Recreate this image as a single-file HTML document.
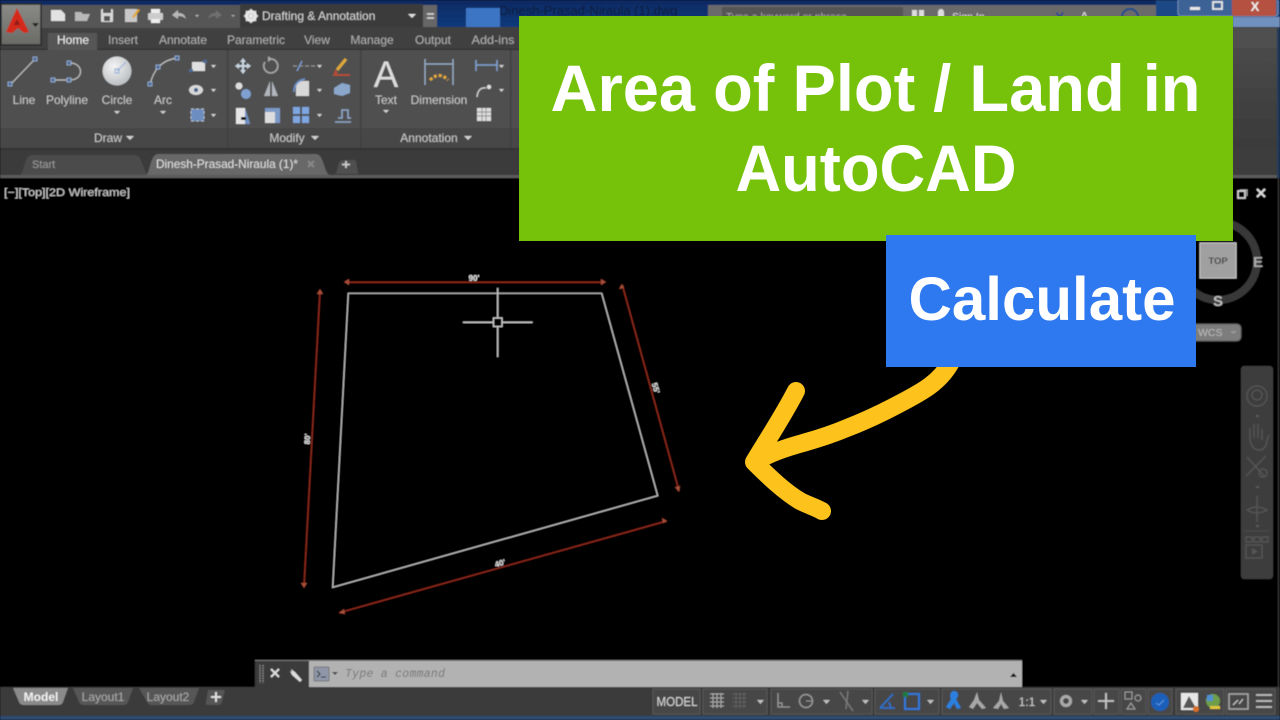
<!DOCTYPE html>
<html><head><meta charset="utf-8"><title>Area of Plot / Land in AutoCAD</title>
<style>
html,body{margin:0;padding:0;background:#000;width:1280px;height:720px;overflow:hidden}
svg{position:absolute;left:0;top:0;display:block}
text{font-family:"Liberation Sans",sans-serif}
</style></head><body>
<svg width="1280" height="720" viewBox="0 0 1280 720">
<defs>
<linearGradient id="tb" x1="0" y1="0" x2="0" y2="1"><stop offset="0" stop-color="#0d2a62"/><stop offset="1" stop-color="#123a7c"/></linearGradient>
<linearGradient id="app" x1="0" y1="0" x2="0" y2="1"><stop offset="0" stop-color="#8a8a86"/><stop offset="1" stop-color="#6a6a66"/></linearGradient>
<linearGradient id="rg" x1="0" y1="0" x2="0" y2="1"><stop offset="0" stop-color="#4a4a4a"/><stop offset="1" stop-color="#3a3a3a"/></linearGradient>
<radialGradient id="circ" cx=".4" cy=".35" r=".75"><stop offset="0" stop-color="#f4f4f4"/><stop offset="1" stop-color="#b4b8bc"/></radialGradient>
<filter id="b" x="-2%" y="-2%" width="104%" height="104%"><feGaussianBlur stdDeviation="0.6"/></filter>
<filter id="b2" x="-2%" y="-2%" width="104%" height="104%"><feGaussianBlur stdDeviation="0.35"/></filter>
</defs>
<rect width="1280" height="720" fill="#000"/>
<g filter="url(#b)">
<!-- title bar -->
<rect width="1280" height="28" fill="url(#tb)"/>
<rect x="466" y="8" width="34" height="20" fill="#3a74c4"/>
<text x="499" y="15" font-size="13" fill="#0c1c3a">Dinesh-Prasad-Niraula (1).dwg</text>
<rect x="708" y="5" width="448" height="23" fill="#6b6b6b"/>
<rect x="722" y="7" width="181" height="21" fill="#555"/>
<text x="726" y="20" font-size="10.5" fill="#aaa">Type a keyword or phrase</text>
<text x="952" y="20" font-size="10.5" fill="#ddd">Sign In</text>
<text x="1055" y="22" font-size="14" font-weight="bold" fill="#1c4a8c">X</text>
<text x="1080" y="21" font-size="13" fill="#ddd">A</text>
<circle cx="1130" cy="17" r="8" fill="none" stroke="#1c4a8c" stroke-width="2"/>
<rect x="912" y="10" width="5" height="10" fill="#ddd"/><rect x="919" y="10" width="5" height="10" fill="#ddd"/><rect x="938" y="9" width="6" height="12" rx="3" fill="#ddd"/>
<rect x="1156" y="0" width="124" height="28" fill="#1c4a86"/>
<rect x="1178" y="-2" width="100" height="18" rx="3" fill="#3c6295" stroke="#8aa6c8" stroke-width=".7"/>
<rect x="1232" y="-2" width="44" height="18" rx="2" fill="#b5513f"/>
<rect x="1190" y="7" width="10" height="3" fill="#e8e8e8"/>
<rect x="1213" y="2" width="9" height="7" fill="none" stroke="#e8e8e8" stroke-width="1.800"/>
<text x="1255" y="11" font-size="13" font-weight="bold" fill="#f0f0f0" text-anchor="middle">X</text>
<rect x="1233" y="17" width="47" height="11" fill="#6f90bd"/>

<!-- ribbon base -->
<rect x="0" y="27" width="1280" height="23" fill="#3f3f3f"/>
<rect x="0" y="49" width="1280" height="1" fill="#2d2d2d"/>
<rect x="0" y="50" width="1280" height="78" fill="#505050"/>
<rect x="0" y="128" width="1280" height="20" fill="#474747"/>
<rect x="0" y="148" width="1280" height="2" fill="#333"/>
<rect x="0" y="150" width="1280" height="25" fill="#3b3b3b"/>
<rect x="0" y="175" width="1280" height="3" fill="#5c5c5c"/>
<rect x="1233" y="28" width="47" height="20" fill="#505050"/>
<rect x="1233" y="48" width="47" height="101" fill="url(#rg)"/>
<rect x="1233" y="149" width="47" height="26" fill="#3c3c3c"/>
<rect x="1277" y="28" width="3" height="150" fill="#243a5c"/>
<rect x="227" y="50" width="1.5" height="98" fill="#3f3f3f"/><rect x="360" y="50" width="1.5" height="98" fill="#3f3f3f"/><rect x="510" y="50" width="1.5" height="98" fill="#3f3f3f"/>

<!-- QAT -->
<path d="M40 5H240V28H40Z" fill="#565656"/>
<path d="M240 4H423V27H240Z" fill="#3a3a3a"/>
<path d="M423 5H437V27H423Z" fill="#666"/>
<path d="M427 14h7M427 18h7" stroke="#ddd" stroke-width="1.5"/>
<path d="M408 14h8l-4 4z" fill="#ddd"/>
<rect x="1" y="4" width="40" height="41" fill="url(#app)" stroke="#2c2c2c" stroke-width="1.5"/>
<path d="M17 8 L29 32 L24 33 L18 28 L12 33 L6 32 Z" fill="#d32a1f"/>
<path d="M17 19l-3 6h6z" fill="#8e1c14"/>
<path d="M32 23h7l-3.500 4z" fill="#222"/>
<!-- qat icons -->
<path d="M51 10h10l4 4v7H51Z" fill="#e2e2e2"/>
<path d="M75 12h6l2 2h7l-3 7H75Z" fill="#b8b8b8"/>
<rect x="101" y="9" width="12" height="13" rx="1" fill="#d8d8d8"/><rect x="103" y="9" width="8" height="4" fill="#555"/><rect x="104" y="16" width="6" height="5" fill="#555"/>
<rect x="125" y="9" width="12" height="13" fill="#c8c8c8"/><path d="M132 17l6-8 2 1-6 8z" fill="#e2a62b"/>
<rect x="148" y="13" width="15" height="7" rx="1" fill="#ccc"/><rect x="151" y="9" width="9" height="4" fill="#eee"/><rect x="151" y="19" width="9" height="4" fill="#eee"/>
<path d="M172 15l6-5v3c5 0 7 2 8 6-2-2-4-3-8-3v3z" fill="#b8b8b8"/>
<path d="M195 15h4l-2 2z" fill="#bbb"/>
<path d="M222 15l-6-5v3c-5 0-7 2-8 6 2-2 4-3 8-3v3z" fill="#6f6f6f"/>
<path d="M231 15h4l-2 2z" fill="#aaa"/>
<circle cx="251" cy="16" r="4.500" fill="none" stroke="#e8e8e8" stroke-width="3"/>
<path d="M251 9v14M244 16h14M246 11l10 10M256 11l-10 10" stroke="#e8e8e8" stroke-width="1.500"/>
<text x="262" y="20" font-size="12" fill="#d2d2d2">Drafting &amp; Annotation</text>

<!-- tabs -->
<path d="M48 50V33h49v17Z" fill="#565656"/>
<text x="73" y="44" font-size="12" text-anchor="middle" fill="#f0f0f0">Home</text>
<g font-size="12" text-anchor="middle" fill="#aeaeae">
<text x="123" y="44">Insert</text><text x="183" y="44">Annotate</text><text x="256" y="44">Parametric</text><text x="317" y="44">View</text><text x="372" y="44">Manage</text><text x="433" y="44">Output</text><text x="493" y="44" textLength="43" lengthAdjust="spacingAndGlyphs">Add-ins</text>
</g>

<!-- Draw icons -->
<g fill="none" stroke="#c0c0c0" stroke-width="1.200">
<path d="M10 85L35 59"/>
<path d="M53 80H70C84 80 84 63 70 63"/>
<path d="M150 85C153 70 162 60 177 58"/>
</g>
<g fill="#4f6a97" stroke="#9db6db" stroke-width=".8">
<rect x="8" y="82" width="4" height="4"/><rect x="33" y="57" width="4" height="4"/>
<rect x="51" y="78" width="4" height="4"/><rect x="67" y="78" width="4" height="4"/><rect x="67" y="61" width="4" height="4"/>
<rect x="148" y="82" width="4" height="4"/><rect x="156" y="65" width="4" height="4"/><rect x="175" y="56" width="4" height="4"/>
</g>
<circle cx="117" cy="71" r="14.500" fill="url(#circ)"/>
<path d="M117 71L126 62" stroke="#8fb0dc" stroke-width="1"/><rect x="115" y="69" width="4" height="4" fill="none" stroke="#7c9fd2" stroke-width=".8"/>
<g font-size="12" text-anchor="middle" fill="#c8c8c8">
<text x="24" y="104">Line</text><text x="67" y="104">Polyline</text><text x="117" y="104">Circle</text><text x="163" y="104">Arc</text>
<text x="386" y="104">Text</text><text x="439" y="104">Dimension</text>
<text x="108" y="142">Draw</text><text x="287" y="142">Modify</text><text x="429" y="142">Annotation</text>
</g>
<g fill="#d0d0d0">
<path d="M114 111h6l-3 3zM160 111h6l-3 3zM383 110h6l-3 3z"/>
<path d="M126 136h8l-4 4zM311 136h8l-4 4zM464 136h8l-4 4z"/>
<path d="M211 65h5l-2.500 3zM211 89h5l-2.500 3zM211 114h5l-2.500 3zM317 65h5l-2.500 3zM317 89h5l-2.500 3zM317 114h5l-2.500 3zM499 65h5l-2.500 3zM499 89h5l-2.500 3z"/>
</g>
<path d="M192 62h13v9h-13z" fill="#e0e0e0"/><rect x="189" y="69" width="4" height="3" fill="#4f6a97"/><rect x="203" y="60" width="4" height="3" fill="#4f6a97"/>
<ellipse cx="196" cy="90" rx="7" ry="5" fill="#d8d8d8"/><circle cx="196" cy="90" r="2" fill="#45618e"/>
<rect x="191" y="109" width="13" height="12" fill="#6c8dbf" stroke="#b8c0cc" stroke-width="1" stroke-dasharray="3 2"/>
<!-- Modify icons -->
<path d="M243 58l3 4h-2v3h3v-2l4 3-4 3v-2h-3v3h2l-3 4-3-4h2v-3h-3v2l-4-3 4-3v2h3v-3h-2z" fill="#c8d4e0"/>
<path d="M265 62A7 7 0 1 0 270 59" fill="none" stroke="#a8a8a8" stroke-width="1.600"/><path d="M268 56l4 3-4 3z" fill="#a8a8a8"/>
<path d="M293 66h23" stroke="#909090" stroke-width="1.200" stroke-dasharray="4 2"/><path d="M297 71l5-10" stroke="#7fa0d8" stroke-width="1.300"/>
<path d="M346 59l-9 11" stroke="#e0a93a" stroke-width="3"/><path d="M335 70l-1 4 4-1z" fill="#cc4a2b"/><path d="M333 75h17" stroke="#cc4a2b" stroke-width="1.500"/>
<circle cx="239" cy="86" r="3.500" fill="#ddd"/><circle cx="246" cy="94" r="5" fill="#7fa0d0"/>
<path d="M270 81l-6 15h6ZM272 81l6 15h-6Z" fill="#b0b6bc"/>
<path d="M296 96V88q0-6 6-7h7v15Z" fill="#d8d8d8"/><path d="M294 92q0-11 11-13" stroke="#6d90c8" stroke-width="1.800" fill="none"/>
<path d="M334 88l8-5 8 2v8l-8 3-8-2Z" fill="#8ba7cc"/>
<path d="M236 108h9l5 16h-14Z" fill="#e6e6e6"/><path d="M245 108l5 16h-5Z" fill="#6e90c4"/><rect x="241" y="117" width="5" height="3" fill="#111"/>
<rect x="265" y="108" width="15" height="15" fill="#7b9ac8"/><rect x="265" y="112" width="10" height="11" fill="#ddd"/>
<g fill="#7ea6e0"><rect x="293" y="107" width="7" height="7"/><rect x="302" y="107" width="7" height="7"/><rect x="293" y="116" width="7" height="7"/><rect x="302" y="116" width="7" height="7"/></g>
<path d="M335 122h16M338 118h4v-8h6v8h3" fill="none" stroke="#8ea6c8" stroke-width="1.600"/>
<!-- Annotation icons -->
<text x="386" y="87" font-size="37" text-anchor="middle" fill="#dcdcdc">A</text>
<path d="M425 59v26M453 59v26M425 64h28" stroke="#9ab0cc" stroke-width="1.300" fill="none"/>
<path d="M430 80q9-9 18 0" stroke="#e0a93a" stroke-width="3" stroke-dasharray="3 2" fill="none"/>
<path d="M476 60v11M497 60v11M476 65h21" stroke="#7fa0d0" stroke-width="1.500" fill="none"/>
<path d="M477 97q1-10 9-9" stroke="#ccc" stroke-width="1.500" fill="none"/><circle cx="489" cy="87" r="2.200" fill="#e0e0e0"/>
<rect x="477" y="108" width="14" height="13" fill="#ddd"/><path d="M477 112h14M477 116h14M482 108v13M486 108v13" stroke="#777" stroke-width=".7"/>

<!-- file tabs -->
<path d="M20 175c4-1 4-20 12-20h103c8 0 8 19 14 20Z" fill="#4c4c4c"/>
<path d="M146 175c4-1 4-21 12-21h158c8 0 8 20 14 21Z" fill="#686868"/>
<path d="M335 174c3-1 2-14 8-14h12c2 0 2 14 4 14Z" fill="#505050"/>
<text x="32" y="168" font-size="11" fill="#9c9c9c">Start</text>
<text x="156" y="168" font-size="12" fill="#e0e0e0" textLength="142" lengthAdjust="spacingAndGlyphs">Dinesh-Prasad-Niraula (1)*</text>
<path d="M308 161l6 6M314 161l-6 6" stroke="#888" stroke-width="2"/>
<path d="M346 161v7M342 164.500h8" stroke="#ccc" stroke-width="1.800"/>

<!-- canvas -->
<rect x="0" y="178" width="1280" height="510" fill="#000"/>
<text x="4" y="196" font-size="11" fill="#d2d2d2" textLength="126" lengthAdjust="spacingAndGlyphs">[−][Top][2D Wireframe]</text>
<rect x="1278" y="178" width="1" height="510" fill="#3a3a3a"/>
<rect x="1238" y="191" width="7" height="7" fill="none" stroke="#ddd" stroke-width="1.600"/><path d="M1240 190h7v6" stroke="#aaa" fill="none"/>
<path d="M1257 189l8 8M1265 189l-8 8" stroke="#ddd" stroke-width="2"/>

<!-- drawing -->
<path d="M348.300 293.300H601.700L657.700 495.700L332.700 587.300Z" fill="none" stroke="#c8c8c8" stroke-width="1.200"/>
<g stroke="#8c2a1e" stroke-width="1.500" fill="none">
<path d="M347 282.300H604"/><path d="M622.300 285L679 490.700"/><path d="M666.700 521L339.300 612.700"/><path d="M320 290.700L304 586.700"/>
</g>
<g fill="#a8503a">
<path d="M344 282l5-3v6ZM606 282l-5-3v6Z"/><path d="M622 284l-3 5 5-1ZM679 492l-4-5 5-1Z"/><path d="M667 521l-5-3 1 5ZM339 613l5-4 1 5Z"/><path d="M320 289l-3 5h6ZM304 588l-3-5h6Z"/>
</g>
<g font-size="8" font-weight="bold" fill="#eee" text-anchor="middle">
<text x="474" y="281">90'</text>
<text x="656" y="391" transform="rotate(74 656 388)">55'</text>
<text x="500" y="566" transform="rotate(-16 500 563)">40'</text>
<text x="307" y="442" transform="rotate(-87 307 439)">80'</text>
</g>
<g stroke="#d0d0d0" stroke-width="1.300" fill="none">
<path d="M463 322.300H493.500M502 322.300H532.500M497.700 288V318M497.700 327V357"/>
<rect x="493.500" y="318" width="8.500" height="8.500"/>
</g>

<!-- viewcube -->
<circle cx="1218" cy="261" r="39" fill="none" stroke="#383838" stroke-width="8"/>
<rect x="1200" y="243" width="36" height="35" fill="#a0a0a0" stroke="#c4c4c4" stroke-width="1"/>
<text x="1218" y="264" font-size="9.500" font-weight="bold" text-anchor="middle" fill="#444">TOP</text>
<text x="1258" y="267" font-size="15" font-weight="bold" text-anchor="middle" fill="#a8a8a8">E</text>
<text x="1218" y="306" font-size="15" font-weight="bold" text-anchor="middle" fill="#bcbcbc">S</text>
<rect x="1190" y="324" width="51" height="17" rx="4" fill="#7d7d7d" stroke="#555"/>
<text x="1198" y="336" font-size="10.500" fill="#bdbdbd">WCS</text>
<path d="M1230 331h7l-3.500 3z" fill="#999"/>
<!-- navbar -->
<rect x="1241" y="366" width="32" height="213" rx="3" fill="#3c3c3c"/>
<g fill="none" stroke="#555" stroke-width="1.400">
<circle cx="1257" cy="396" r="10"/><circle cx="1257" cy="395" r="5"/>
<path d="M1250 440v-12M1254 438v-14M1258 438v-14M1262 440v-11M1250 440q2 10 9 10t8-10l2-5" />
<path d="M1247 457l18 20M1266 456l-20 20"/><circle cx="1263" cy="473" r="4"/>
<path d="M1257 496v26M1247 510q10-6 20 0q-10 6-20 0"/>
<path d="M1246 537h6v5h-6ZM1254 537h6v5h-6ZM1262 537h6v5h-6Z"/><rect x="1246" y="545" width="16" height="13"/>
<path d="M1244 531h26" stroke="#4a4a4a"/>
</g>
<path d="M1252 548l6 3.500-6 3.500Z" fill="#555"/>
<path d="M1256 415h3v2h-3ZM1256 486h3v2h-3ZM1256 525h3v2h-3Z" fill="#5a5a5a"/>

<!-- command line -->
<rect x="255" y="661" width="54" height="26" fill="#3a3a3a"/>
<rect x="309" y="661" width="713" height="26" fill="#b2b2b2"/>
<rect x="255" y="660" width="767" height="1" fill="#777"/>
<path d="M260 665v18M263 665v18" stroke="#8a8a8a" stroke-width="1.500" stroke-dasharray="1.500 1"/>
<path d="M271 669l8 8M279 669l-8 8" stroke="#ddd" stroke-width="2"/>
<path d="M291 669l4 3 7 8-2 2-8-7-2-4 2 1Z" fill="#ddd"/>
<rect x="314" y="667" width="15" height="14" rx="1" fill="#8e96a8" stroke="#777"/>
<path d="M317 671l3 3-3 3M321 677h5" stroke="#222" stroke-width="1" fill="none"/>
<path d="M332 672h6l-3 3z" fill="#444"/>
<text x="345" y="677" font-size="11.500" font-style="italic" fill="#757575" style="font-family:'Liberation Mono',monospace" textLength="100" lengthAdjust="spacing">Type a command</text>
<path d="M1010 677h7l-3.500-4z" fill="#111"/>

<!-- status bar -->
<rect x="0" y="687" width="1280" height="33" fill="#3a3a3a"/>
<rect x="0" y="716" width="1280" height="4" fill="#2e4c72"/>
<path d="M13 688h55l-5 14q-1 3-5 3H24q-4 0-5-3Z" fill="#8a8a8a"/>
<path d="M73 688h60l-5 14q-1 3-5 3H84q-4 0-5-3Z" fill="#565656"/>
<path d="M139 688h60l-5 14q-1 3-5 3h-37q-4 0-5-3Z" fill="#565656"/>
<path d="M208 690h17l-3 12q-1 3-4 3h-10q-3 0-2-3Z" fill="#555"/>
<text x="41" y="701" font-size="12" font-weight="bold" text-anchor="middle" fill="#f0f0f0">Model</text>
<text x="103" y="701" font-size="12" text-anchor="middle" fill="#aaa">Layout1</text>
<text x="168" y="701" font-size="12" text-anchor="middle" fill="#aaa">Layout2</text>
<path d="M216 692v10M211 697h10" stroke="#ddd" stroke-width="2"/>
<!-- status right -->
<rect x="653" y="689" width="47" height="25" fill="#474747" stroke="#5a5a5a"/>
<rect x="703" y="689" width="64" height="25" fill="#474747" stroke="#5a5a5a"/>
<rect x="771" y="689" width="101" height="25" fill="#474747" stroke="#5a5a5a"/>
<rect x="875" y="689" width="64" height="25" fill="#474747" stroke="#5a5a5a"/>
<rect x="942" y="689" width="109" height="25" fill="#474747" stroke="#5a5a5a"/>
<rect x="1054" y="689" width="38" height="25" fill="#474747" stroke="#5a5a5a"/>
<rect x="1094" y="689" width="25" height="25" fill="#474747" stroke="#5a5a5a"/>
<rect x="1121" y="689" width="25" height="25" fill="#474747" stroke="#5a5a5a"/>
<rect x="1148" y="689" width="24" height="25" fill="#474747" stroke="#5a5a5a"/>
<rect x="1176" y="689" width="48" height="25" fill="#474747" stroke="#5a5a5a"/>
<rect x="1226" y="689" width="49" height="25" fill="#474747" stroke="#5a5a5a"/>
<text x="677" y="706" font-size="12.500" text-anchor="middle" fill="#d8d8d8" textLength="41" lengthAdjust="spacingAndGlyphs">MODEL</text>
<path d="M710 694h14M710 698h14M710 702h14M710 706h14M713 693v15M717 693v15M721 693v15" stroke="#a8a8a8" stroke-width="1"/>
<path d="M733 694h14M733 698h14M733 702h14M733 706h14M736 693v15M740 693v15M744 693v15" stroke="#707070" stroke-width="1" stroke-dasharray="1 1"/>
<g fill="#c0c0c0"><path d="M757 700h7l-3.500 4zM823 700h7l-3.500 4zM862 700h7l-3.500 4zM927 700h7l-3.500 4zM1040 700h7l-3.500 4zM1081 700h7l-3.500 4z"/></g>
<path d="M778 693v14h12M778 703h4v4" fill="none" stroke="#989898" stroke-width="1.300"/>
<circle cx="806" cy="701" r="6.500" fill="none" stroke="#989898" stroke-width="1.500"/><path d="M806 701h7" stroke="#989898"/>
<path d="M840 692l13 19M848 691l-2 18" stroke="#7a7a7a" stroke-width="1.400"/>
<path d="M880 708l13-14M880 708h15M889 702l2 6" stroke="#2f6fc8" stroke-width="1.800" fill="none"/>
<rect x="905" y="694" width="14" height="15" fill="none" stroke="#2f78d8" stroke-width="2"/><rect x="903" y="692" width="5" height="5" fill="#1d7a3f"/>
<path d="M954 691c5 0 5 6 2 8l5 9-4 1-3-6-4 6-4-2 5-8c-2-4 0-8 3-8Z" fill="#2b80e0"/>
<path d="M977 692l2 8 7 8-4 1-5-6-4 6-4-2 5-7Z" fill="#a8a8a8"/>
<path d="M1001 692l2 9 6 7-5 1-3-5-3 5-5-1 6-7Z" fill="#a8a8a8"/>
<text x="1027" y="706" font-size="12" text-anchor="middle" fill="#d0d0d0">1:1</text>
<circle cx="1066" cy="701" r="4.500" fill="none" stroke="#a8a8a8" stroke-width="3.200"/>
<path d="M1106 693v16M1098 701h16" stroke="#c8c8c8" stroke-width="1.800"/>
<rect x="1125" y="692" width="7" height="7" fill="none" stroke="#989898" stroke-width="1.200"/><circle cx="1138" cy="698" r="3" fill="none" stroke="#989898" stroke-width="1.200"/><path d="M1131 703l4 6h-8Z" fill="none" stroke="#989898" stroke-width="1.200"/>
<circle cx="1160" cy="702" r="9" fill="#1d5fb8"/><path d="M1156 703l3 2 5-5" stroke="#5b9ae8" fill="none"/>
<rect x="1181" y="693" width="17" height="17" fill="#e6e6e6"/><path d="M1183 708l6-12 7 12" fill="#555"/><circle cx="1196" cy="709" r="3" fill="#d8702a"/>
<circle cx="1213" cy="701" r="7" fill="#6e9e4a"/><path d="M1207 695h6v6h-6Z" fill="#4f8ed0"/><path d="M1210 706h10v3h-10Z" fill="#e0c53a"/>
<rect x="1229" y="694" width="19" height="15" fill="none" stroke="#a8a8a8" stroke-width="1.500"/><path d="M1233 705l5-5M1239 704l4-5" stroke="#c0c0c0" stroke-width="1.400"/>
<path d="M1256 695h16M1256 701h16M1256 707h16" stroke="#c0c0c0" stroke-width="1.800"/>
</g>

<!-- overlay -->
<rect x="519" y="16" width="714" height="225" fill="#76c10a"/>
<g fill="none" stroke="#fdc31c" stroke-width="18" stroke-linecap="round" stroke-linejoin="round">
<path d="M951 362C940 382 924 391 897 405C880 414 865 421 847 428C828 436 810 441 803 443C785 448 770 453 755 462"/>
<path d="M796 391C782 418 767 440 754 462C770 478 785 492 800 501C810 506 815 507 822 511"/>
</g>
<rect x="886" y="235" width="310" height="132" fill="#2f79f0"/>
<g filter="url(#b2)">
<text x="875.500" y="111" font-size="66" font-weight="bold" fill="#fff" text-anchor="middle" textLength="650" lengthAdjust="spacingAndGlyphs">Area of Plot / Land in</text>
<text x="876" y="191" font-size="66" font-weight="bold" fill="#fff" text-anchor="middle" textLength="281" lengthAdjust="spacingAndGlyphs">AutoCAD</text>
<text x="1042" y="320" font-size="61" font-weight="bold" fill="#fff" text-anchor="middle" textLength="267" lengthAdjust="spacingAndGlyphs">Calculate</text>
</g>
</svg>
</body></html>
